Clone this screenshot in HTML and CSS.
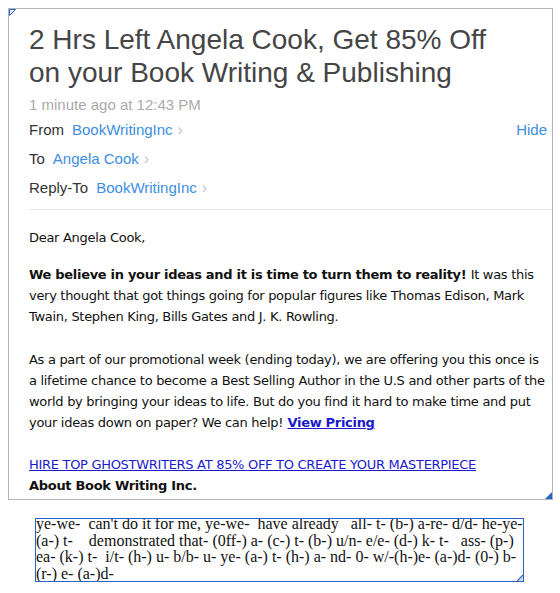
FILE: index.html
```html
<!DOCTYPE html>
<html>
<head>
<meta charset="utf-8">
<link rel="stylesheet" href="styles.css">
</head>
<body>
<div class="mail">
  <svg class="grip grip-tl" width="7" height="7" viewBox="0 0 7 7"><path d="M0.5 0.5H6.5L0.5 6.5Z" fill="#dfe9f8" stroke="#2a63c4" stroke-width="1"/></svg>
  <div class="head">
    <h1 class="subject">2 Hrs Left Angela Cook, Get 85% Off on your Book Writing &amp; Publishing</h1>
    <div class="time">1 minute ago at 12:43 PM</div>
    <div class="row">
      <span class="label">From</span>
      <a class="addr">BookWritingInc</a><span class="chev">&#x203A;</span>
      <a class="hide">Hide</a>
    </div>
    <div class="row">
      <span class="label">To</span>
      <a class="addr">Angela Cook</a><span class="chev">&#x203A;</span>
    </div>
    <div class="row">
      <span class="label">Reply-To</span>
      <a class="addr">BookWritingInc</a><span class="chev">&#x203A;</span>
    </div>
  </div>
  <div class="body">
    <p class="greet">Dear Angela Cook,</p>
    <p class="p1"><b>We believe in your ideas and it is time to turn them to reality!</b> It was this very thought that got things going for popular figures like Thomas Edison, Mark Twain, Stephen King, Bills Gates and J. K. Rowling.</p>
    <p>As a part of our promotional week (ending today), we are offering you this once is a lifetime chance to become a Best Selling Author in the U.S and other parts of the world by bringing your ideas to life. But do you find it hard to make time and put your ideas down on paper? We can help! <a class="pricing">View Pricing</a></p>
    <p class="last"><a class="hire">HIRE TOP GHOSTWRITERS AT 85% OFF TO CREATE YOUR MASTERPIECE</a><br><b>About Book Writing Inc.</b></p>
  </div>
  <svg class="grip grip-br" width="7" height="7" viewBox="0 0 7 7"><path d="M7 0V7H0Z" fill="#2a63c4"/></svg>
</div>
<div class="note">
  <div class="note-text">ye-we-&nbsp; can't do it for me, ye-we-&nbsp; have already &nbsp; all- t- (b-) a-re- d/d- he-ye- (a-) t- &nbsp;&nbsp; demonstrated that- (0ff-) a- (c-) t- (b-) u/n- e/e- (d-) k- t- &nbsp; ass- (p-) ea- (k-) t-&nbsp; i/t- (h-) u- b/b- u- ye- (a-) t- (h-) a- nd- 0- w/-(h-)e- (a-)d- (0-) b- (r-) e- (a-)d-</div>
  <svg class="grip grip-br2" width="6" height="6" viewBox="0 0 6 6"><path d="M6 0V6H0Z" fill="#cfdcf3"/><path d="M6 0L0 6" stroke="#2a63c4" stroke-width="1.2"/></svg>
</div>
</body>
</html>
```
FILE: styles.css
```css
html, body { margin: 0; padding: 0; background: #fff; }
body { padding: 8px; }

.mail {
  position: relative;
  width: 545px;
  height: 492px;
  box-sizing: border-box;
  border: 1px solid #b4b4b4;
  padding: 0 0 0 20px;
  overflow: hidden;
}

.head {
  font-family: "Liberation Sans", Arial, sans-serif;
  padding-top: 14px;
  border-bottom: 1px solid #e6e6e6;
  padding-bottom: 7px;
}

.subject {
  margin: 0;
  font-weight: normal;
  font-size: 28px;
  line-height: 33px;
  color: #454545;
  padding-right: 40px;
}

.time {
  margin-top: 6px;
  font-size: 15px;
  line-height: 20px;
  color: #aaaaaa;
}

.row {
  display: flex;
  align-items: baseline;
  font-size: 15px;
  line-height: 29px;
  color: #333;
  padding-right: 5px;
}
.label { margin-right: 8px; }
.addr { color: #3d8ee0; }
.chev { color: #c4c4c4; margin-left: 5px; font-size: 16px; }
.hide { margin-left: auto; color: #3d8ee0; }

.body {
  font-family: "DejaVu Sans", Verdana, sans-serif;
  font-size: 13px;
  letter-spacing: -0.3px;
  line-height: 21px;
  color: #111;
  padding-right: 6px;
}
.body p { margin: 0 0 21px; }
.body .greet { margin: 17px 0 16px; }
.body .p1 { margin-bottom: 22px; }
.body .last { margin: 0; }
.body b { padding-right: 0.5px; }
.pricing { color: #1a1acc; font-weight: bold; text-decoration: underline; padding-left: 0.5px; }
.hire { color: #1a1acc; text-decoration: underline; }

.grip { position: absolute; display: block; }
.grip-tl { left: 0; top: 0; }
.grip-br { right: 0; bottom: 0; }
.grip-br2 { right: 0; bottom: 0; }

.note {
  position: relative;
  margin: 18px 0 0 27px;
  width: 489px;
  height: 64px;
  box-sizing: border-box;
  border: 1px solid #2a63c4;
  padding: 0;
  overflow: hidden;
  font-family: "Liberation Serif", "Times New Roman", serif;
  font-size: 16px;
  line-height: 16.5px;
  color: #111;
}
.note-text { margin-top: -3px; }
```
